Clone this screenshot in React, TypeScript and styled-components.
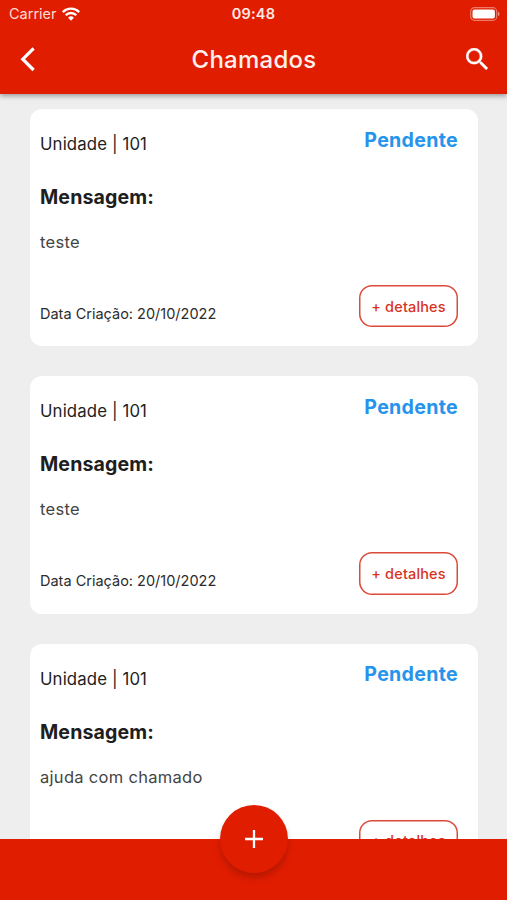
import React from "react";
import styled, { createGlobalStyle } from "styled-components";

const RED = "#e11d00";

const GlobalStyle = createGlobalStyle`
  * { box-sizing: border-box; }
  body { margin: 0; background: #eeeeee; }
  button { font: inherit; margin: 0; padding: 0; border: 0; background: none; color: inherit; }
`;

const Screen = styled.div`
  position: relative;
  width: 507px;
  height: 900px;
  display: flex;
  flex-direction: column;
  overflow: hidden;
  background: #eeeeee;
  font-family: Inter, "Liberation Sans", sans-serif;
`;

const Header = styled.header`
  position: relative;
  z-index: 1;
  flex: none;
  height: 94px;
  background: ${RED};
  color: #fff;
  box-shadow: 0 2px 5px rgba(0, 0, 0, 0.36);
`;

const StatusBar = styled.div`
  height: 27px;
  padding: 0 7px 0 9px;
  display: grid;
  grid-template-columns: 1fr auto 1fr;
  align-items: center;
`;

const Carrier = styled.div`
  display: flex;
  align-items: center;
  gap: 5.5px;
  font-size: 14.5px;
  color: #ffdcd6;
`;

const Clock = styled.div`
  padding-right: 2px;
  font-size: 14.5px;
  font-weight: 600;
  letter-spacing: 0.2px;
  color: #ffe9e5;
`;

const Battery = styled.svg`
  justify-self: end;
`;

const NavBar = styled.nav`
  height: 64px;
  padding: 0 19px 0 16px;
  display: grid;
  grid-template-columns: 1fr auto 1fr;
  align-items: center;
`;

const Title = styled.h1`
  margin: 0;
  padding-left: 4px;
  font-size: 24px;
  font-weight: 500;
  letter-spacing: 0.25px;
  color: #fff0ed;
`;

const IconButton = styled.button<{ $end?: boolean }>`
  display: flex;
  justify-self: ${(p) => (p.$end ? "end" : "start")};
`;

const List = styled.main`
  flex: 1;
  min-height: 0;
  overflow: hidden;
  padding: 15px 29px 0 30px;
  display: flex;
  flex-direction: column;
  gap: 30px;
`;

const Card = styled.article`
  flex: none;
  height: 237.4px;
  padding: 0 20px 0 10px;
  display: flex;
  justify-content: space-between;
  border-radius: 12px;
  background: #fff;
`;

const Details = styled.div`
  padding-top: 23.1px;
`;

const Unit = styled.div`
  font-size: 16.8px;
  line-height: 24px;
  letter-spacing: 0.12px;
  color: #222;
`;

const Label = styled.h2`
  margin: 27px 0 0;
  font-size: 19.6px;
  line-height: 28px;
  font-weight: 700;
  letter-spacing: 0.1px;
  color: #1e1e1e;
`;

const Message = styled.p`
  margin: 19px 0 0;
  font-size: 16.5px;
  line-height: 24px;
  letter-spacing: 0.3px;
  color: #444;
`;

const Created = styled.div`
  margin-top: 50px;
  font-size: 14.5px;
  line-height: 20px;
  color: #2c2c2c;
`;

const Side = styled.div`
  padding: 16.5px 0 19px;
  display: flex;
  flex-direction: column;
  align-items: flex-end;
  justify-content: space-between;
`;

const Status = styled.div`
  font-size: 19.6px;
  line-height: 28px;
  font-weight: 700;
  letter-spacing: 0.3px;
  color: #2693ec;
`;

const DetailsButton = styled.button`
  && {
    width: 99px;
    height: 42.5px;
    border-radius: 13px;
    box-shadow: inset 0 0 0 1.5px #dc4a39;
    font-size: 14.5px;
    font-weight: 500;
    letter-spacing: 0.15px;
    color: #d83222;
  }
`;

const Footer = styled.footer`
  flex: none;
  height: 61px;
  background: ${RED};
  display: flex;
  justify-content: center;
  align-items: flex-start;
`;

const AddButton = styled.button`
  && {
    position: relative;
    z-index: 2;
    width: 68px;
    height: 68px;
    margin-top: -34px;
    border-radius: 50%;
    background: ${RED};
    display: flex;
    align-items: center;
    justify-content: center;
    box-shadow: 0 5px 7px rgba(0, 0, 0, 0.19);
  }
`;

const tickets = [
  { unit: "101", message: "teste", date: "20/10/2022" },
  { unit: "101", message: "teste", date: "20/10/2022" },
  { unit: "101", message: "ajuda com chamado", date: "20/10/2022" },
];

export default function App() {
  return (
    <Screen>
      <GlobalStyle />
      <Header>
        <StatusBar>
          <Carrier>
            Carrier
            <svg width="18" height="14" viewBox="0 0 18 14" fill="none" stroke="#fff" strokeWidth="2.3">
              <path d="M0.8 5.1a11.6 11.6 0 0 1 16.4 0" />
              <path d="M3.7 8.2a7.5 7.5 0 0 1 10.6 0" />
              <path d="M9 13.7 6.1 10.8a4.1 4.1 0 0 1 5.8 0z" fill="#fff" stroke="none" />
            </svg>
          </Carrier>
          <Clock>09:48</Clock>
          <Battery width="30" height="14" viewBox="0 0 30 14">
            <rect x="0.7" y="0.7" width="26" height="12.6" rx="3.8" fill="none" stroke="#fff" strokeOpacity="0.42" strokeWidth="1.2" />
            <rect x="2.5" y="2.4" width="22.4" height="9.2" rx="2" fill="#fff" />
            <path d="M28 4.8c2 .7 2 3.7 0 4.4z" fill="#fff" fillOpacity="0.5" />
          </Battery>
        </StatusBar>
        <NavBar>
          <IconButton aria-label="Voltar">
            <svg width="24" height="26" viewBox="0 0 24 26" fill="none" stroke="#fff" strokeWidth="3.2">
              <path d="M17.6 2.4 6.8 13.2l10.8 10.8" />
            </svg>
          </IconButton>
          <Title>Chamados</Title>
          <IconButton $end aria-label="Buscar">
            <svg width="22" height="22" viewBox="3 3 17.5 17.5" fill="#fff" stroke="#fff" strokeWidth="0.2">
              <path d="M15.5 14h-.79l-.28-.27A6.47 6.47 0 0 0 16 9.5 6.5 6.5 0 1 0 9.5 16c1.61 0 3.09-.59 4.23-1.57l.27.28v.79l5 4.99L20.49 19l-4.99-5zm-6 0C7.01 14 5 11.99 5 9.5S7.01 5 9.5 5 14 7.01 14 9.5 11.99 14 9.5 14z" />
            </svg>
          </IconButton>
        </NavBar>
      </Header>
      <List>
        {tickets.map((ticket, index) => (
          <Card key={index}>
            <Details>
              <Unit>Unidade | {ticket.unit}</Unit>
              <Label>Mensagem:</Label>
              <Message>{ticket.message}</Message>
              <Created>Data Criação: {ticket.date}</Created>
            </Details>
            <Side>
              <Status>Pendente</Status>
              <DetailsButton>+ detalhes</DetailsButton>
            </Side>
          </Card>
        ))}
      </List>
      <Footer>
        <AddButton aria-label="Adicionar">
          <svg width="18" height="18" viewBox="0 0 18 18" stroke="#fff" strokeWidth="2.3">
            <path d="M9 0v18M0 9h18" />
          </svg>
        </AddButton>
      </Footer>
    </Screen>
  );
}
